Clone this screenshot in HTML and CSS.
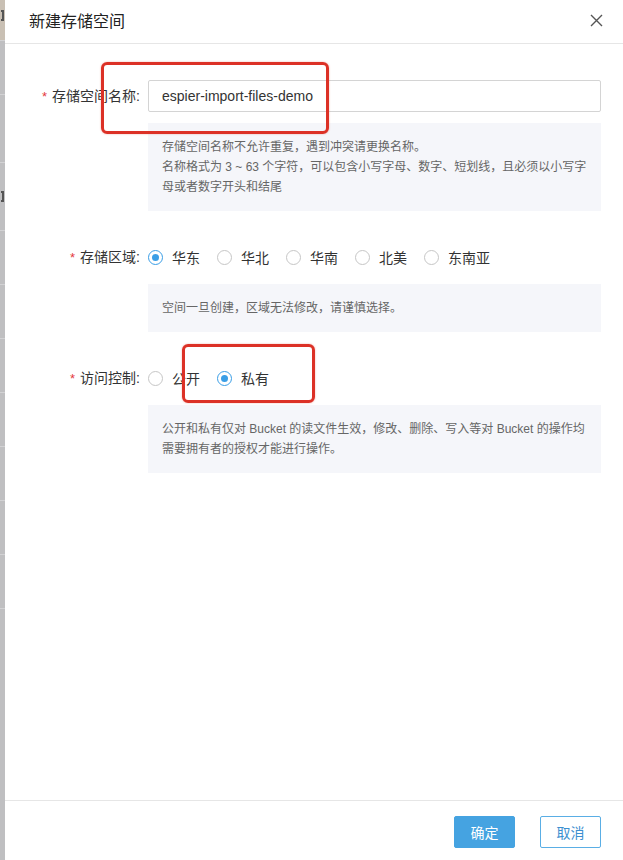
FILE: index.html
```html
<!DOCTYPE html>
<html lang="zh-CN">
<head>
<meta charset="utf-8">
<title>新建存储空间</title>
<link rel="stylesheet" href="styles.css">
</head>
<body>
<div class="page">
  <div class="side">
    <div class="side-top"><span class="side-mark"></span></div>
    <div class="side-row"></div>
    <div class="side-row side-row-tall"></div>
    <div class="side-row side-row-tall"><span class="side-mark side-mark-low"></span></div>
    <div class="side-row"></div>
    <div class="side-row"></div>
    <div class="side-row"></div>
    <div class="side-row"></div>
    <div class="side-row"></div>
    <div class="side-row"></div>
    <div class="side-row"></div>
    <div class="side-row"></div>
  </div>
  <div class="modal">
    <div class="modal-header">
      <span class="modal-title">新建存储空间</span>
      <svg class="close" width="13" height="13" viewBox="0 0 13 13"><path d="M1 1 L12 12 M12 1 L1 12" stroke="#555" stroke-width="1.4" fill="none"/></svg>
    </div>
    <div class="modal-body">
      <div class="form-item">
        <label class="form-label"><span class="req">*</span>存储空间名称:</label>
        <div class="input">espier-import-files-demo</div>
        <div class="hint">存储空间名称不允许重复，遇到冲突请更换名称。<br>名称格式为 3 ~ 63 个字符，可以包含小写字母、数字、短划线，且必须以小写字母或者数字开头和结尾</div>
      </div>
      <div class="form-item">
        <label class="form-label"><span class="req">*</span>存储区域:</label>
        <div class="radio-group">
          <span class="radio"><span class="dot checked"></span>华东</span>
          <span class="radio"><span class="dot"></span>华北</span>
          <span class="radio"><span class="dot"></span>华南</span>
          <span class="radio"><span class="dot"></span>北美</span>
          <span class="radio"><span class="dot"></span>东南亚</span>
        </div>
        <div class="hint">空间一旦创建，区域无法修改，请谨慎选择。</div>
      </div>
      <div class="form-item">
        <label class="form-label"><span class="req">*</span>访问控制:</label>
        <div class="radio-group">
          <span class="radio"><span class="dot"></span>公开</span>
          <span class="radio"><span class="dot checked"></span>私有</span>
        </div>
        <div class="hint">公开和私有仅对 Bucket 的读文件生效，修改、删除、写入等对 Bucket 的操作均需要拥有者的授权才能进行操作。</div>
      </div>
    </div>
    <div class="modal-footer">
      <button class="btn btn-primary">确定</button>
      <button class="btn btn-default">取消</button>
    </div>
  </div>
  <div class="mark mark-name"></div>
  <div class="mark mark-acl"></div>
</div>
</body>
</html>
```

FILE: styles.css
```css
* { box-sizing: border-box; }
html, body {
  margin: 0;
  padding: 0;
  width: 623px;
  height: 860px;
  overflow: hidden;
}
body {
  font-family: "Liberation Sans", "Noto Sans CJK SC", sans-serif;
  font-size: 14px;
  color: #333;
  background: #c0c0c2;
}
.page {
  position: relative;
  display: flex;
  height: 860px;
}
.side {
  width: 5px;
  flex: none;
  overflow: hidden;
  background: #bfbfc1;
  display: flex;
  flex-direction: column;
}
.side-top {
  height: 40px;
  background: #c9c0b4;
  position: relative;
  flex: none;
}
.side-row {
  height: 54px;
  flex: none;
  border-top: 1px solid #d2d2d4;
  position: relative;
}
.side-row-tall { height: 68px; }
.side-mark {
  position: absolute;
  left: 1px;
  top: 10px;
  width: 3px;
  height: 11px;
  border-top: 2px solid #555;
  border-bottom: 2px solid #555;
  border-right: 2px solid #555;
}
.side-mark-low { top: 28px; }
.modal {
  flex: 1;
  background: #fff;
  height: 860px;
  display: flex;
  flex-direction: column;
}
.modal-header {
  height: 44px;
  flex: none;
  border-bottom: 1px solid #e6e6e6;
  display: flex;
  align-items: center;
  justify-content: space-between;
  padding: 0 20px 4px 24px;
}
.modal-title {
  font-size: 16px;
  color: #222;
  font-weight: 400;
}
.close { display: block; margin-top: 2px; }
.modal-body {
  flex: 1;
  padding: 36px 22px 0 0;
}
.form-item {
  display: grid;
  grid-template-columns: 143px 1fr;
  margin-bottom: 30px;
}
.form-label {
  text-align: right;
  line-height: 32px;
  height: 32px;
  padding-right: 8px;
  color: #333;
  white-space: nowrap;
}
.req {
  color: #e4393c;
  font-size: 13px;
  margin-right: 5px;
}
.input {
  height: 32px;
  border: 1px solid #d4d4d4;
  border-radius: 2px;
  padding: 0 13px;
  line-height: 30px;
  color: #333;
}
.hint {
  grid-column: 2;
  margin-top: 11px;
  background: #f5f6fa;
  padding: 14px;
  font-size: 12px;
  line-height: 20px;
  color: #666;
}
.radio-group {
  display: flex;
  align-items: center;
  height: 32px;
}
.radio {
  display: flex;
  align-items: center;
  margin-right: 17px;
  color: #333;
}
.dot {
  width: 15px;
  height: 15px;
  border: 1px solid #c6c6c6;
  border-radius: 50%;
  margin-right: 9px;
  position: relative;
  background: #fff;
}
.dot.checked { border-color: #3a9ee6; }
.dot.checked::after {
  content: "";
  position: absolute;
  left: 3px;
  top: 3px;
  width: 7px;
  height: 7px;
  border-radius: 50%;
  background: #3a9ee6;
}
.modal-footer {
  height: 60px;
  flex: none;
  border-top: 1px solid #e6e6e6;
  display: flex;
  justify-content: flex-end;
  align-items: flex-start;
  gap: 25px;
  padding: 15px 22px 0 0;
}
.btn {
  width: 61px;
  height: 32px;
  font-family: inherit;
  font-size: 14px;
  border-radius: 2px;
  cursor: pointer;
}
.btn-primary {
  background: #45a3e1;
  border: 1px solid #45a3e1;
  color: #fff;
}
.btn-default {
  background: #fff;
  border: 1px solid #5aaee5;
  color: #3c8fd0;
}
.mark {
  position: absolute;
  border: 3px solid #dc3126;
  border-radius: 6px;
  box-shadow: 0 0 2px rgba(220, 49, 38, 0.4);
}
.mark-name {
  left: 101px;
  top: 62px;
  width: 228px;
  height: 72px;
}
.mark-acl {
  left: 182px;
  top: 344px;
  width: 133px;
  height: 59px;
}
```
